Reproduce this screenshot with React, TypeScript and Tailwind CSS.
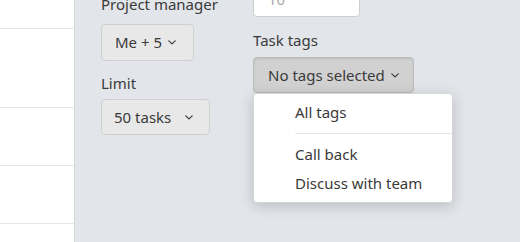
import React from "react";

function Chevron() {
  return (
    <svg width="8" height="5" viewBox="0 0 8 5" className="shrink-0">
      <path d="M0.8 0.9 L4 3.9 L7.2 0.9" fill="none" stroke="#3a3a3a" strokeWidth="1.2" strokeLinecap="round" strokeLinejoin="round" />
    </svg>
  );
}

export default function App() {
  return (
    <div
      className="w-[520px] h-[242px] flex overflow-hidden text-[15px] text-[#3a3a3a]"
      style={{ fontFamily: '"Noto Sans", "Open Sans", sans-serif' }}
    >
      <div className="w-[75px] shrink-0 bg-white border-r border-[#d5d8dc] flex flex-col">
        <div className="h-[29px] border-b border-[#e6e6e6]" />
        <div className="h-[79px] border-b border-[#e6e6e6]" />
        <div className="h-[58px] border-b border-[#e6e6e6]" />
        <div className="h-[58px] border-b border-[#e6e6e6]" />
      </div>
      <div className="flex-1 bg-[#e2e5e9] pl-[26px] grid grid-cols-[152px_auto] content-start">
        <div className="flex flex-col items-start">
          <div className="leading-[20px] -mt-[6px]">Project manager</div>
          <button className="mt-[10px] h-[37px] w-[93px] pl-[13px] pr-[17px] flex items-center justify-between bg-[#e8e8e8] border border-[#d0d0d0] rounded-[4px] text-[15px] text-[#3a3a3a]">
            <span>Me + 5</span>
            <Chevron />
          </button>
          <div className="leading-[20px] mt-[12px]">Limit</div>
          <button className="mt-[6px] h-[36px] w-[109px] pl-[12px] pr-[16px] flex items-center justify-between bg-[#e8e8e8] border border-[#d0d0d0] rounded-[4px] text-[15px] text-[#3a3a3a]">
            <span>50 tasks</span>
            <Chevron />
          </button>
        </div>
        <div className="flex flex-col items-start">
          <div className="-mt-[19px] h-[36px] w-[107px] bg-white border border-[#cfcfcf] rounded-[4px] pl-[14px] flex items-center text-[#aaa]">
            10
          </div>
          <div className="leading-[20px] mt-[13px]">Task tags</div>
          <div className="relative mt-[7px]">
            <button className="h-[36px] w-[161px] pl-[14px] pr-[14px] flex items-center justify-between bg-[#d1d1d1] border border-[#bababa] rounded-[4px] text-[15px] text-[#3a3a3a] shadow-[inset_0_1px_2px_rgba(0,0,0,0.08)]">
              <span>No tags selected</span>
              <Chevron />
            </button>
            <div className="absolute left-0 top-[36px] w-[200px] bg-white border border-[#d6d6d6] rounded-[4px] shadow-[0_3px_14px_rgba(0,0,0,0.18)] pt-[4px] pb-[4px]">
              <div className="h-[29px] pl-[41px] pt-[5px] leading-[19px]">All tags</div>
              <div className="ml-[41px] my-[6px] h-px bg-[#e6e6e6]" />
              <div className="h-[29px] pl-[41px] pt-[5px] leading-[19px]">Call back</div>
              <div className="h-[29px] pl-[41px] pt-[5px] leading-[19px]">Discuss with team</div>
            </div>
          </div>
        </div>
      </div>
    </div>
  );
}
